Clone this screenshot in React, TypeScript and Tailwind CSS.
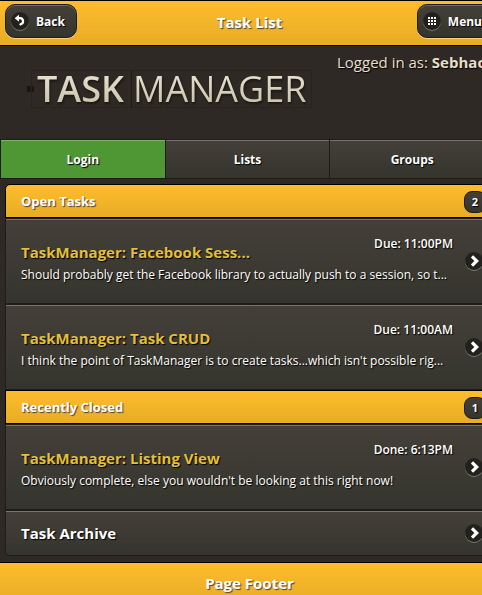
import type { ReactNode } from "react";

const font = "font-['Trebuchet_MS','Open_Sans',sans-serif]";
const dark = "bg-linear-to-b from-[#444039] to-[#35352d]";
const gold = "bg-linear-to-b from-[#fdbc2c] to-[#e8ac25]";
const darkShadow = "[text-shadow:1px_1px_1px_#000]";
const goldShadow = "[text-shadow:1px_1px_1px_#444]";
const logoInk =
  "bg-linear-to-b from-[#f0ebda] to-[#c0bba3] bg-clip-text text-transparent drop-shadow-[1px_2px_1px_#1a1713]";

function Disc({ children }: { children: ReactNode }) {
  return (
    <span className="flex size-[18px] shrink-0 items-center justify-center rounded-full bg-[#23211d] shadow-[0_1px_0_#77746b]">
      {children}
    </span>
  );
}

function BackIcon() {
  return (
    <svg width="18" height="18" viewBox="0 0 18 18" fill="none" aria-hidden="true">
      <path d="M7 6.2H9.3a3 3 0 0 1 .8 5.8L8.6 12.9" stroke="#fff" strokeWidth="2.2" />
      <path d="M3.6 6.3 8 2.8V9.8Z" fill="#fff" />
    </svg>
  );
}

function GridIcon() {
  return (
    <svg width="18" height="18" viewBox="0 0 18 18" fill="#fff" aria-hidden="true">
      {[5, 8, 11].map((y) =>
        [5, 8, 11].map((x) => <rect key={`${x}-${y}`} x={x} y={y} width="2" height="2" />),
      )}
    </svg>
  );
}

function Arrow() {
  return (
    <Disc>
      <svg width="18" height="18" viewBox="0 0 18 18" fill="none" aria-hidden="true">
        <path d="M7 4.4 11.7 9 7 13.6" stroke="#fff" strokeWidth="3.2" />
      </svg>
    </Disc>
  );
}

function BarButton({ icon, label }: { icon: ReactNode; label: string }) {
  return (
    <button
      type="button"
      className={`flex h-[34px] items-center gap-[7px] rounded-[10px] border border-[#1e1c18] pr-[11px] pl-[5px] text-xs font-bold text-white shadow-[inset_0_1px_0_#6d6a62,0_1px_0_#f9d57c] ${dark} ${darkShadow}`}
    >
      <Disc>{icon}</Disc>
      <span className="pt-[2px]">{label}</span>
    </button>
  );
}

function Tab({ label, active }: { label: string; active?: boolean }) {
  return (
    <a
      href="#"
      className={`flex h-[38px] flex-1 items-center justify-center border-l border-[#1e1c18] pt-[2px] text-xs font-bold text-white ${darkShadow} ${
        active ? "bg-[#4f9634] shadow-[inset_0_1px_0_#7cb367]" : `${dark} shadow-[inset_0_1px_0_#77746b]`
      }`}
    >
      {label}
    </a>
  );
}

function Divider({ label, count }: { label: string; count: number }) {
  return (
    <li
      className={`flex h-[34px] items-center justify-between border border-black pr-[7px] pl-[15px] text-[13px] font-bold text-white first:rounded-t-[5px] ${gold} ${goldShadow}`}
    >
      <h2 className="pt-[2px]">{label}</h2>
      <span
        className={`mt-[2px] flex h-[22px] w-[22px] items-center justify-center rounded-[8px] border border-[#1e1c18] text-[11px] ${dark} ${darkShadow}`}
      >
        {count}
      </span>
    </li>
  );
}

const rowBox = `flex border border-[#1e1c18] shadow-[inset_0_1px_0_#77746b] pl-[15px] pr-[10px] text-white ${dark} ${darkShadow}`;

function Task({ title, text, time }: { title: string; text: string; time: string }) {
  return (
    <li>
      <a href="#" className={`${rowBox} h-[86px] items-center`}>
        <div className="flex min-w-0 flex-1 flex-col self-start pt-[17px] whitespace-nowrap">
          <p className="pr-3 text-right text-xs leading-4 font-semibold">{time}</p>
          <h3 className="-mt-[10px] text-[15px] leading-5 font-bold text-[#e2bf3b]">{title}</h3>
          <p className="pt-[5px] text-xs leading-4 font-medium">{text}</p>
        </div>
        <Arrow />
      </a>
    </li>
  );
}

export default function App() {
  return (
    <div className={`h-screen overflow-hidden bg-[#2e2924] ${font}`}>
      <div className="w-[calc(100%+17px)]">
        <header
          className={`grid h-[46px] grid-cols-[1fr_auto_1fr] items-center border-y border-black px-[5px] pb-1 ${gold}`}
        >
          <div className="flex">
            <BarButton icon={<BackIcon />} label="Back" />
          </div>
          <h1 className={`pt-[2px] text-[15px] font-bold text-white ${goldShadow}`}>Task List</h1>
          <div className="flex justify-end">
            <BarButton icon={<GridIcon />} label="Menu" />
          </div>
        </header>

        <div className="flex h-[93px] gap-[25px] pl-[27px] whitespace-nowrap">
          <div className="mt-[24px] flex h-[38px] items-center">
            <span className="h-[6px] w-[7px] bg-[#1a1713]" />
            <div className="-ml-[3px] flex h-[38px] items-center border border-[#27231e] font-['Open_Sans',sans-serif] text-4xl leading-9">
              <span className="w-[100px] border-r border-[#1f1c18] pl-[5px]">
                <span className={`font-semibold ${logoInk}`}>TASK</span>
              </span>
              <span className="w-[179px] pl-px">
                <span className={`font-normal ${logoInk}`}>MANAGER</span>
              </span>
            </div>
          </div>
          <p className={`pt-1 text-[15px] leading-6 text-[#e6dfc8] ${darkShadow}`}>
            Logged in as: <strong>Sebhac</strong>
          </p>
        </div>

        <nav className="mr-[5px] flex border-y border-[#1e1c18]">
          <Tab label="Login" active />
          <Tab label="Lists" />
          <Tab label="Groups" />
        </nav>

        <ul className="mx-[5px] mt-[5px] mb-[6px]">
          <Divider label="Open Tasks" count={2} />
          <Task
            title="TaskManager: Facebook Sess..."
            text="Should probably get the Facebook library to actually push to a session, so t..."
            time="Due: 11:00PM"
          />
          <Task
            title="TaskManager: Task CRUD"
            text="I think the point of TaskManager is to create tasks...which isn't possible rig..."
            time="Due: 11:00AM"
          />
          <Divider label="Recently Closed" count={1} />
          <Task
            title="TaskManager: Listing View"
            text="Obviously complete, else you wouldn't be looking at this right now!"
            time="Done: 6:13PM"
          />
          <li>
            <a
              href="#"
              className={`${rowBox} h-[46px] items-center justify-between rounded-b-[5px] text-[15px] font-bold`}
            >
              Task Archive
              <Arrow />
            </a>
          </li>
        </ul>

        <footer
          className={`flex h-[42px] items-center justify-center border-y border-black text-[15px] font-bold text-white ${gold} ${goldShadow}`}
        >
          Page Footer
        </footer>
      </div>
    </div>
  );
}
